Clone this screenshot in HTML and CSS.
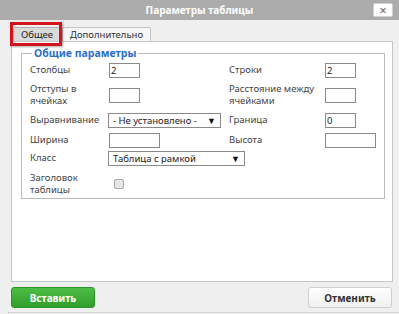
FILE: index.html
```
<!DOCTYPE html>
<html lang="ru">

<head>
    <meta charset="UTF-8">
    <title>Параметры таблицы</title>
    <link rel="stylesheet" href="styles.css">
</head>

<body>

    <div class="dialog">
        <div class="titlebar">
            <span></span>
            <span class="title">Параметры таблицы</span>
            <span class="close">×</span>
        </div>

        <div class="tabs">
            <span class="tab active">Общее</span>
            <span class="tab">Дополнительно</span>
        </div>
        <!-- annotation around the first tab -->
        <div class="highlight"></div>

        <div class="panel">
            <fieldset class="group">
                <legend>Общие параметры</legend>
                <div class="form-grid">
                    <label>Столбцы</label>
                    <div><span class="field small">2</span></div>
                    <label>Строки</label>
                    <div><span class="field small">2</span></div>

                    <label>Отступы в<br>ячейках</label>
                    <div><span class="field small"></span></div>
                    <label>Расстояние между<br>ячейками</label>
                    <div><span class="field small"></span></div>

                    <label>Выравнивание</label>
                    <div><span class="select align">- Не установлено - <b>▼</b></span></div>
                    <label>Граница</label>
                    <div><span class="field small">0</span></div>

                    <label>Ширина</label>
                    <div><span class="field wide"></span></div>
                    <label>Высота</label>
                    <div><span class="field wide"></span></div>

                    <label>Класс</label>
                    <div class="span3"><span class="select cls">Таблица с рамкой <b>▼</b></span></div>

                    <label>Заголовок<br>таблицы</label>
                    <div><span class="checkbox"></span></div>
                </div>
            </fieldset>
        </div>

        <div class="footer">
            <button class="btn ok">Вставить</button>
            <button class="btn cancel">Отменить</button>
        </div>
        <div class="bottom-edge"></div>
    </div>

</body>

</html>
```

FILE: styles.css
```
body {
    margin: 0;
    padding: 0;
    background-color: #efefef;
    font-family: "Noto Sans", Tahoma, sans-serif;
    font-size: 10px;
    color: #444;
}

.dialog {
    position: relative;
    height: 314px;
}

.titlebar {
    display: grid;
    grid-template-columns: 26px 1fr 26px;
    align-items: center;
    height: 20px;
    background-color: #acacac;
}

.title {
    text-align: center;
    color: white;
    font-weight: bold;
    font-size: 10px;
}

.close {
    width: 18px;
    height: 12px;
    line-height: 12px;
    text-align: center;
    background: white;
    border: 1px solid #d0d0d0;
    border-radius: 2px;
    color: #666;
    font-size: 13px;
}

.tabs {
    display: flex;
    gap: 2px;
    padding: 7px 0 0 13px;
    height: 14px;
    font-size: 9.5px;
}

.tab {
    padding: 0 7px;
    line-height: 13px;
    height: 13px;
    border: 1px solid #c4c4c4;
    border-bottom: none;
    border-radius: 2px 2px 0 0;
    background: #f6f6f6;
    color: #333;
}

.tab.active {
    width: 31px;
    background: #dadada;
    border-color: #b0b0b0;
    color: #222;
}

.highlight {
    position: absolute;
    left: 10px;
    top: 22px;
    width: 46px;
    height: 18px;
    border: 3px solid #d4141c;
    box-shadow: 1px 1px 2px rgba(0, 0, 0, 0.35);
}

.panel {
    margin: 0 6px 0 11px;
    height: 234px;
    background: white;
    border: 1px solid #c2c8c8;
    padding: 5px 9px 0 9px;
}

.group {
    margin: 0;
    padding: 0 8px 0 8px;
    border: 1px solid #b8bcbc;
    height: 150px;
}

.group legend {
    padding: 0 2px;
    margin-left: 2px;
    color: #2a6ec8;
    font-weight: bold;
    font-size: 10.5px;
    line-height: 13px;
}

.form-grid {
    display: grid;
    grid-template-columns: 78px 121px 95px 1fr;
    grid-template-rows: 20px 30px 20px 20px 16px 36px;
    align-items: center;
    font-size: 9.5px;
    line-height: 12px;
}

.span3 {
    grid-column: span 3;
}

.field {
    display: block;
    height: 13px;
    line-height: 13px;
    border: 1px solid #8a8a8a;
    background: white;
    color: #222;
    padding-left: 1px;
}

.field.small {
    width: 28px;
    margin-left: 1px;
}

.field.wide {
    width: 48px;
    margin-left: 1px;
}

.select {
    display: flex;
    justify-content: space-between;
    height: 13px;
    line-height: 13px;
    border: 1px solid #8a8a8a;
    background: white;
    color: #222;
    padding: 0 4px 0 4px;
}

.select b {
    font-size: 9px;
    color: #111;
}

.select.align {
    width: 103px;
}

.select.cls {
    width: 127px;
}

.checkbox {
    display: block;
    width: 8px;
    height: 8px;
    margin-left: 6px;
    border: 1px solid #aaa;
    border-radius: 2px;
    background: #e6e6e6;
}

.footer {
    display: flex;
    justify-content: space-between;
    padding: 5px 7px 0 11px;
}

.btn {
    width: 84px;
    height: 21px;
    font-family: "Noto Sans", Tahoma, sans-serif;
    font-size: 10px;
    font-weight: bold;
    border-radius: 3px;
    padding: 0;
}

.btn.ok {
    background: linear-gradient(#4dbd45, #2f9f2b);
    border: 1px solid #2c9428;
    color: white;
}

.btn.cancel {
    background: linear-gradient(#ffffff, #f0f0f0);
    border: 1px solid #cfcfcf;
    color: #333;
}

.bottom-edge {
    margin: 4px 0 0 8px;
    border-top: 1px solid #d2d2d2;
    border-left: 1px solid #d2d2d2;
    height: 5px;
}
```
